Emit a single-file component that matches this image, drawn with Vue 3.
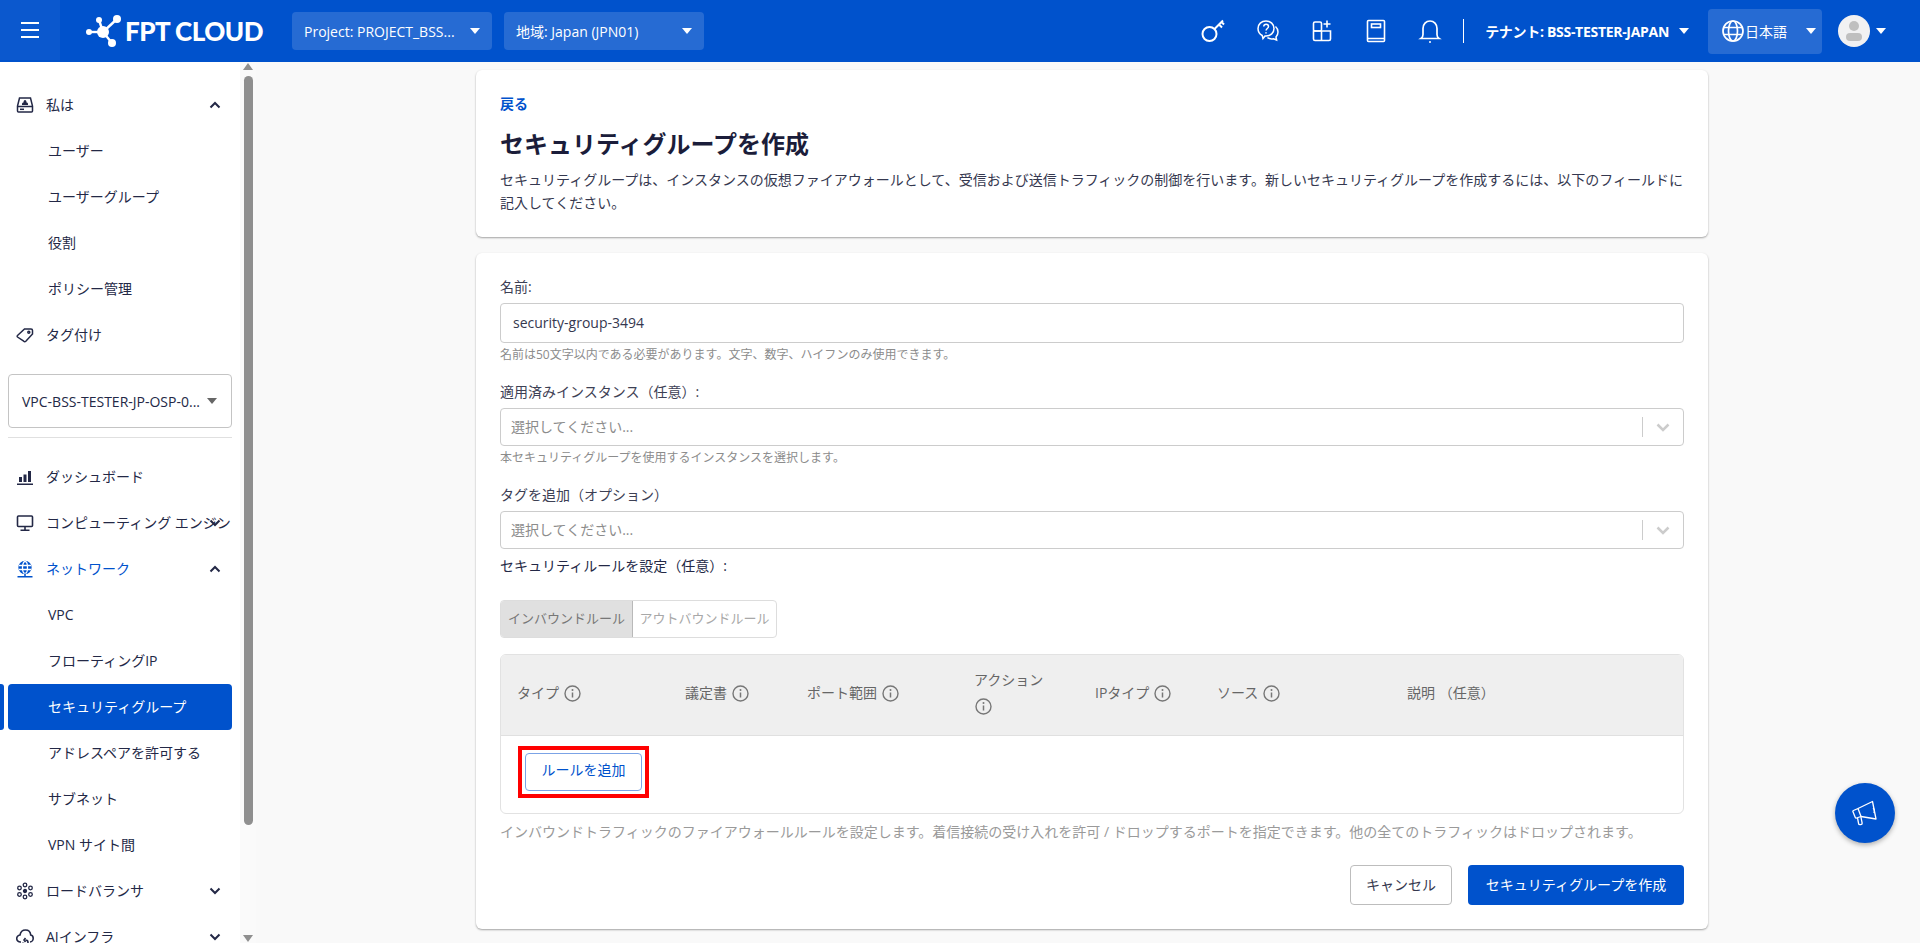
<script setup>
const topNav = [
  { label: '私は', icon: 'drive', open: true },
  { label: 'ユーザー', sub: true },
  { label: 'ユーザーグループ', sub: true },
  { label: '役割', sub: true },
  { label: 'ポリシー管理', sub: true },
  { label: 'タグ付け', icon: 'tag' }
]

const mainNav = [
  { label: 'ダッシュボード', icon: 'bars' },
  { label: 'コンピューティング エンジン', icon: 'monitor', closed: true },
  { label: 'ネットワーク', icon: 'globe', open: true, current: true },
  { label: 'VPC', sub: true },
  { label: 'フローティングIP', sub: true },
  { label: 'セキュリティグループ', sub: true, active: true },
  { label: 'アドレスペアを許可する', sub: true },
  { label: 'サブネット', sub: true },
  { label: 'VPN サイト間', sub: true },
  { label: 'ロードバランサ', icon: 'cluster', closed: true },
  { label: 'AIインフラ', icon: 'cloud', closed: true }
]

const columns = [
  { label: 'タイプ', info: true },
  { label: '議定書', info: true },
  { label: 'ポート範囲', info: true },
  { label: 'アクション', info: true },
  { label: 'IPタイプ', info: true },
  { label: 'ソース', info: true },
  { label: '説明 （任意）', info: false }
]
</script>

<template>
  <div class="page">
    <header class="topbar">
      <button class="burger" aria-label="menu">
        <span></span><span></span><span></span>
      </button>
      <div class="logo">
        <svg width="38" height="36" viewBox="0 0 38 36">
          <g stroke="#fff" stroke-width="2.4">
            <line x1="5" y1="19" x2="18" y2="19" />
            <line x1="14" y1="7" x2="18" y2="19" />
            <line x1="32" y1="6" x2="18" y2="19" />
            <line x1="27" y1="30" x2="18" y2="19" />
          </g>
          <g fill="#fff">
            <circle cx="18" cy="19" r="6" />
            <circle cx="4" cy="19" r="3" />
            <circle cx="14" cy="7" r="3" />
            <circle cx="32" cy="6" r="4" />
            <circle cx="27" cy="30" r="4" />
          </g>
        </svg>
        <span class="logo-text">FPT CLOUD</span>
      </div>
      <div class="top-select"><span>Project: PROJECT_BSS...</span><i class="caret"></i></div>
      <div class="top-select"><span>地域: Japan (JPN01)</span><i class="caret"></i></div>

      <div class="top-right">
        <div class="top-icons">
          <svg width="25" height="24" viewBox="0 0 25 24" fill="none" stroke="#fff" stroke-width="2">
            <circle cx="8.5" cy="15" r="7" />
            <path d="M13.5 10 22 1.5M18 5.5l3 3M20.5 3l2.5 2.5" />
          </svg>
          <svg width="24" height="24" viewBox="0 0 24 24" fill="none" stroke="#fff" stroke-width="1.5">
            <path d="M10 2c4.6 0 8 3.200 8 7.500S14.600 17 10 17l-1 0-2 2.500-.8-3C3.500 15 2 12.500 2 9.500 2 5.200 5.400 2 10 2Z" />
            <path d="M7.700 7.500c.2-3 4.800-3 4.800 0 0 2-2.400 2-2.400 4M10 13.200v1.200" />
            <path d="M19.500 7.500c1.700 1.500 2.500 3.300 2.500 5.500 0 2-.8 3.700-2 5l.6 3-3.200-1.300c-2 .5-4.300 0-6-1" />
          </svg>
          <svg width="24" height="24" viewBox="0 0 24 24" fill="none" stroke="#fff" stroke-width="1.6">
            <rect x="3.500" y="3" width="8" height="9" rx="1.500" />
            <path d="M3.500 12h17v8a1.500 1.500 0 0 1-1.500 1.500H5A1.500 1.500 0 0 1 3.500 20V12ZM11.500 12v9.500" />
            <path d="M17 1.500v7M13.500 5h7" />
          </svg>
          <svg width="24" height="24" viewBox="0 0 24 24" fill="none" stroke="#fff" stroke-width="1.6">
            <path d="M4.500 1.500h15a1 1 0 0 1 1 1v19a1 1 0 0 1-1 1h-15a1 1 0 0 1-1-1v-19a1 1 0 0 1 1-1ZM3.500 19.500h17" />
            <rect x="7.500" y="5" width="9" height="3.500" />
          </svg>
          <svg width="24" height="24" viewBox="0 0 24 24" fill="none" stroke="#fff" stroke-width="1.7">
            <path d="M3 19.500h18c-1.500-1-2-2.500-2-4V9.500c0-4.500-3-7.500-7-7.500S5 5 5 9.500v6c0 1.500-.5 3-2 4Z" />
            <circle cx="12" cy="23" r="1" fill="#fff" stroke="none" />
          </svg>
        </div>
        <div class="top-divider"></div>
        <div class="tenant">テナント: BSS-TESTER-JAPAN</div>
        <i class="caret tenant-caret"></i>
        <div class="lang">
          <svg width="22" height="22" viewBox="0 0 22 22" fill="none" stroke="#fff" stroke-width="1.700">
            <circle cx="11" cy="11" r="10" />
            <ellipse cx="11" cy="11" rx="4.500" ry="10" />
            <path d="M1.500 7.500h19M1.500 14.500h19" />
          </svg>
          <span>日本語</span>
          <i class="caret lang-caret"></i>
        </div>
        <div class="avatar">
          <svg width="32" height="32" viewBox="0 0 32 32">
            <circle cx="16" cy="16" r="16" fill="#f1f1f2" />
            <circle cx="16" cy="11" r="5" fill="#bfbfbf" />
            <rect x="8" y="18" width="16" height="8" rx="4" fill="#bfbfbf" />
          </svg>
        </div>
        <i class="caret avatar-caret"></i>
      </div>
    </header>

    <div class="body">
      <aside class="sidebar">
        <nav class="nav">
          <div class="nav-group first">
            <div
              v-for="item in topNav"
              :key="item.label"
              class="nav-item"
              :class="{ sub: item.sub }"
            >
              <span v-if="item.icon" class="nav-icon">
                <svg v-if="item.icon === 'drive'" width="18" height="18" viewBox="0 0 18 18" fill="none" stroke="#232846" stroke-width="1.500">
                  <path d="M3.500 2h11l2 8v5a1 1 0 0 1-1 1h-13a1 1 0 0 1-1-1v-5l2-8ZM1.500 10.500h15" />
                  <path d="M6 9c-.5-2 1-2.500 1.500-2.500C7.500 5 8 4 9 4s1.500 1 1.500 2.500c.5 0 2 .5 1.500 2.500Z" fill="#232846" stroke="none" />
                  <path d="M4 13.300h4" />
                </svg>
                <svg v-else-if="item.icon === 'tag'" width="18" height="18" viewBox="0 0 18 18" fill="none" stroke="#232846" stroke-width="1.500">
                  <path d="M1.500 9.500 8.500 3H15a1.500 1.500 0 0 1 1.500 1.500V8L9.800 15.200a1.500 1.500 0 0 1-2.100 0L1.500 11a1 1 0 0 1 0-1.500Z" />
                  <circle cx="12.800" cy="6.200" r="1" />
                </svg>
              </span>
              <span class="nav-label">{{ item.label }}</span>
              <svg v-if="item.open" class="chev" width="12" height="8" viewBox="0 0 12 8" fill="none" stroke="#232846" stroke-width="2">
                <path d="M1.500 6.500 6 2l4.500 4.500" />
              </svg>
            </div>
          </div>

          <div class="vpc-select">
            <span>VPC-BSS-TESTER-JP-OSP-0...</span>
            <i class="caret dark"></i>
          </div>
          <div class="nav-divider"></div>

          <div class="nav-group">
            <div
              v-for="item in mainNav"
              :key="item.label"
              class="nav-item"
              :class="{ sub: item.sub, active: item.active, current: item.current }"
            >
              <span v-if="item.icon" class="nav-icon">
                <svg v-if="item.icon === 'bars'" width="18" height="18" viewBox="0 0 18 18" fill="#232846">
                  <rect x="3" y="9" width="3" height="5" />
                  <rect x="7.500" y="6.500" width="3" height="7.500" />
                  <rect x="12" y="3" width="3" height="11" />
                  <rect x="1" y="15.500" width="16" height="1.500" />
                </svg>
                <svg v-else-if="item.icon === 'monitor'" width="18" height="18" viewBox="0 0 18 18" fill="none" stroke="#232846" stroke-width="1.600">
                  <rect x="1.500" y="2" width="15" height="10.500" rx="1" />
                  <path d="M9 12.500v3.500M4.500 16.200h9" />
                </svg>
                <svg v-else-if="item.icon === 'globe'" width="18" height="18" viewBox="0 0 18 18" fill="none" stroke="#0052cc" stroke-width="1.300">
                  <circle cx="9" cy="7.500" r="6" fill="#0052cc" />
                  <ellipse cx="9" cy="7.500" rx="2.500" ry="6" stroke="#fff" />
                  <path d="M3 5.500h12M3 9.500h12" stroke="#fff" />
                  <path d="M9 13.500v3M1.500 16.800h15" stroke-width="1.500" />
                </svg>
                <svg v-else-if="item.icon === 'cluster'" width="18" height="18" viewBox="0 0 18 18" fill="none" stroke="#232846" stroke-width="1.300">
                  <circle cx="9" cy="3" r="1.800" />
                  <circle cx="3.500" cy="6" r="1.800" />
                  <circle cx="14.500" cy="6" r="1.800" />
                  <circle cx="3.500" cy="12.500" r="1.800" />
                  <circle cx="14.500" cy="12.500" r="1.800" />
                  <circle cx="9" cy="15" r="1.800" />
                  <circle cx="9" cy="9" r="1.500" fill="#232846" />
                </svg>
                <svg v-else-if="item.icon === 'cloud'" width="18" height="18" viewBox="0 0 18 18" fill="none" stroke="#232846" stroke-width="1.600">
                  <path d="M5 14H4.500a3.500 3.500 0 0 1-.5-7C4.500 4 6.800 2 9.500 2c3 0 5 2.200 5.200 5 1.500.3 2.500 1.600 2.500 3.200 0 2-1.400 3.800-3.200 3.800" />
                  <path d="M7 14.500a2.500 2.500 0 1 0 2.500-2.500M9.500 10l-1.500 2 1.500 2" />
                </svg>
              </span>
              <span class="nav-label">{{ item.label }}</span>
              <svg v-if="item.open" class="chev" width="12" height="8" viewBox="0 0 12 8" fill="none" stroke="#232846" stroke-width="2">
                <path d="M1.500 6.500 6 2l4.500 4.500" />
              </svg>
              <svg v-if="item.closed" class="chev" width="12" height="8" viewBox="0 0 12 8" fill="none" stroke="#232846" stroke-width="2">
                <path d="M1.500 1.500 6 6l4.500-4.500" />
              </svg>
            </div>
          </div>
        </nav>
        <div class="rail">
          <i class="rail-up"></i>
          <div class="rail-thumb"></div>
          <i class="rail-down"></i>
        </div>
      </aside>

      <main class="main">
        <section class="card head-card">
          <a class="back">戻る</a>
          <h1>セキュリティグループを作成</h1>
          <p>セキュリティグループは、インスタンスの仮想ファイアウォールとして、受信および送信トラフィックの制御を行います。新しいセキュリティグループを作成するには、以下のフィールドに記入してください。</p>
        </section>

        <section class="card form-card">
          <label class="field-label">名前:</label>
          <input class="text-input" value="security-group-3494" readonly />
          <div class="help">名前は50文字以内である必要があります。文字、数字、ハイフンのみ使用できます。</div>

          <label class="field-label spaced">適用済みインスタンス（任意）:</label>
          <div class="select-box">
            <span>選択してください...</span>
            <i class="select-sep"></i>
            <svg width="14" height="9" viewBox="0 0 14 9" fill="none" stroke="#ccc" stroke-width="2.500"><path d="M1.500 1.500 7 7l5.500-5.500" /></svg>
          </div>
          <div class="help">本セキュリティグループを使用するインスタンスを選択します。</div>

          <label class="field-label spaced">タグを追加（オプション）</label>
          <div class="select-box">
            <span>選択してください...</span>
            <i class="select-sep"></i>
            <svg width="14" height="9" viewBox="0 0 14 9" fill="none" stroke="#ccc" stroke-width="2.500"><path d="M1.500 1.500 7 7l5.500-5.500" /></svg>
          </div>

          <label class="field-label rules-label">セキュリティルールを設定（任意）:</label>

          <div class="tabs">
            <div class="tab on">インバウンドルール</div>
            <div class="tab">アウトバウンドルール</div>
          </div>

          <div class="rules">
            <div class="rules-head">
              <div v-for="col in columns" :key="col.label" class="rules-col">
                {{ col.label }}
                <svg v-if="col.info" class="info" width="17" height="17" viewBox="0 0 17 17" fill="none" stroke="#777" stroke-width="1.400">
                  <circle cx="8.500" cy="8.500" r="7.500" />
                  <path d="M8.500 7.500v5" stroke-width="1.500" />
                  <circle cx="8.500" cy="5" r="1" fill="#777" stroke="none" />
                </svg>
              </div>
            </div>
            <div class="rules-body">
              <div class="mark">
                <button class="add-rule">ルールを追加</button>
              </div>
            </div>
          </div>

          <p class="rules-note">インバウンドトラフィックのファイアウォールルールを設定します。着信接続の受け入れを許可 / ドロップするポートを指定できます。他の全てのトラフィックはドロップされます。</p>

          <div class="actions">
            <button class="btn cancel">キャンセル</button>
            <button class="btn primary">セキュリティグループを作成</button>
          </div>
        </section>

        <button class="fab" aria-label="announcements">
          <svg width="26" height="28" viewBox="0 0 26 28" fill="none" stroke="#fff" stroke-width="1.300" stroke-linejoin="round">
            <path d="M1.500 11.500 6 9.500l3 8-4.500 1.500a1 1 0 0 1-1.200-.6L1 12.800a1 1 0 0 1 .5-1.300Z" />
            <path d="M6 9.500 20.500 2.500 24 20 9 17.500" />
            <path d="M21 9c1.500 1 1.800 3.500.8 5" />
            <path d="M5.500 19l1.200 6c.2 1 3.800.6 3.500-.6l-1.300-6.600" />
          </svg>
        </button>
      </main>
    </div>
  </div>
</template>

<style>
html,
body {
  margin: 0;
  background: #fff;
}
</style>

<style scoped>
.page {
  width: 1920px;
  height: 943px;
  overflow: hidden;
  display: flex;
  flex-direction: column;
  font-family: "Open Sans", "Noto Sans CJK JP", sans-serif;
  font-size: 14px;
  color: #232846;
}

/* header */
.topbar {
  flex: none;
  height: 62px;
  display: flex;
  align-items: center;
  background: #0052cc;
  color: #fff;
}

.burger {
  align-self: flex-start;
  width: 60px;
  height: 60px;
  padding: 0;
  border: none;
  background: #0b58ce;
  display: flex;
  flex-direction: column;
  align-items: center;
  justify-content: center;
  gap: 5px;
}

.burger span {
  width: 18px;
  height: 2px;
  background: #fff;
}

.logo {
  width: 207px;
  margin-left: 25px;
  display: flex;
  align-items: center;
  gap: 2px;
}

.logo-text {
  font-family: "Lato", sans-serif;
  font-size: 26px;
  font-weight: 900;
  letter-spacing: -0.5px;
  white-space: nowrap;
}

.top-select {
  width: 200px;
  height: 38px;
  margin-right: 12px;
  padding: 0 12px;
  box-sizing: border-box;
  display: flex;
  align-items: center;
  justify-content: space-between;
  background: rgba(255, 255, 255, 0.15);
  border-radius: 4px;
  white-space: nowrap;
}

.caret {
  display: block;
  flex: none;
  width: 0;
  height: 0;
  border-left: 5px solid transparent;
  border-right: 5px solid transparent;
  border-top: 6px solid #fff;
}

.caret.dark {
  border-top-color: #666;
}

.top-right {
  margin-left: auto;
  padding-right: 34px;
  display: flex;
  align-items: center;
}

.top-icons {
  display: flex;
  align-items: center;
  gap: 30px;
}

.top-divider {
  width: 1px;
  height: 24px;
  margin: 0 21px 0 21px;
  background: #fff;
}

.tenant {
  font-weight: 700;
  font-size: 14px;
  letter-spacing: -0.3px;
  white-space: nowrap;
}

.tenant-caret {
  margin: 0 19px 0 10px;
}

.lang {
  width: 114px;
  height: 45px;
  padding: 0 6px 0 14px;
  box-sizing: border-box;
  display: flex;
  align-items: center;
  gap: 1px;
  background: rgba(255, 255, 255, 0.15);
  border-radius: 4px;
}

.lang span {
  font-size: 14px;
}

.lang-caret {
  margin-left: auto;
}

.avatar {
  margin-left: 16px;
  height: 32px;
}

.avatar-caret {
  margin-left: 6px;
}

/* sidebar */
.body {
  flex: 1;
  min-height: 0;
  display: flex;
}

.sidebar {
  flex: none;
  width: 256px;
  box-sizing: border-box;
  display: flex;
  background: #fff;
  border-right: 1px solid #e9e9e9;
}

.nav {
  width: 240px;
  flex: none;
  overflow: hidden;
  padding-top: 20px;
  box-sizing: border-box;
}

.nav-item {
  position: relative;
  height: 46px;
  padding: 0 19px 0 16px;
  display: flex;
  align-items: center;
  white-space: nowrap;
}

.nav-item.sub {
  margin: 0 8px;
  padding-left: 40px;
  padding-right: 0;
}

.nav-icon {
  flex: none;
  width: 18px;
  height: 18px;
  margin-right: 12px;
}

.nav-icon svg {
  display: block;
}

.nav-label {
  flex: 1;
  min-width: 0;
  margin-top: -2px;
}

.chev {
  flex: none;
}

.nav-item.current .nav-label {
  color: #0052cc;
}

.nav-item.active {
  background: #0052cc;
  color: #fff;
  border-radius: 4px;
}

.nav-item.active::before {
  content: "";
  position: absolute;
  left: -8px;
  top: 0;
  bottom: 0;
  width: 4px;
  background: #0052cc;
  border-radius: 0 3px 3px 0;
}

.vpc-select {
  width: 224px;
  height: 54px;
  margin: 16px 8px 0;
  padding: 0 14px 0 13px;
  box-sizing: border-box;
  display: flex;
  align-items: center;
  justify-content: space-between;
  border: 1px solid #c4c4c4;
  border-radius: 4px;
  white-space: nowrap;
}

.nav-divider {
  width: 224px;
  height: 1px;
  margin: 9px 8px 16px;
  background: #e0e0e0;
}

.rail {
  flex: 1;
  padding: 1px 3px 1px 3px;
  display: flex;
  flex-direction: column;
  align-items: center;
  background: #fafafa;
}

.rail-up,
.rail-down {
  flex: none;
  width: 0;
  height: 0;
  border-left: 5px solid transparent;
  border-right: 5px solid transparent;
}

.rail-up {
  border-bottom: 7px solid #8f8f8f;
}

.rail-down {
  margin-top: auto;
  border-top: 7px solid #8f8f8f;
}

.rail-thumb {
  width: 9px;
  height: 749px;
  margin-top: 6px;
  background: #8f8f8f;
  border-radius: 5px;
}

/* content */
.main {
  position: relative;
  flex: 1;
  min-width: 0;
  padding: 8px 0 0 220px;
  box-sizing: border-box;
  background: #f9f9f9;
}

.card {
  width: 1232px;
  box-sizing: border-box;
  background: #fff;
  border-radius: 6px;
  box-shadow: 0 1px 2px rgba(0, 0, 0, 0.35);
}

.head-card {
  height: 167px;
  padding: 24px 24px 0;
}

.back {
  display: block;
  line-height: 20px;
  font-size: 14px;
  font-weight: 600;
  color: #0052cc;
}

h1 {
  margin: 14px 0 0;
  font-size: 24px;
  line-height: 32px;
  font-weight: 700;
  color: #1b1d3a;
}

.head-card p {
  margin: 8px 0 0;
  line-height: 23px;
  font-size: 14px;
  color: #35384f;
}

.form-card {
  margin-top: 16px;
  padding: 24px 24px;
}

.field-label {
  display: block;
  line-height: 20px;
  margin-bottom: 6px;
  color: #3d4054;
}

.field-label.spaced {
  margin-top: 19px;
}

.rules-label {
  margin: 7px 0 24px;
  color: #232846;
}

.text-input {
  display: block;
  width: 100%;
  height: 40px;
  padding: 0 12px 2px;
  box-sizing: border-box;
  border: 1px solid #ccc;
  border-radius: 4px;
  outline: none;
  font: inherit;
  color: #35384f;
}

.help {
  margin-top: 4px;
  line-height: 16px;
  font-size: 12px;
  color: #8c8c8c;
}

.select-box {
  height: 38px;
  padding: 0 13px 0 10px;
  box-sizing: border-box;
  display: flex;
  align-items: center;
  border: 1px solid #ccc;
  border-radius: 4px;
  color: #8c8c8c;
}

.select-box span {
  margin-top: -3px;
}

.select-sep {
  width: 1px;
  height: 20px;
  margin: 0 13px 0 auto;
  background: #ccc;
}

.tabs {
  width: 277px;
  height: 38px;
  box-sizing: border-box;
  display: flex;
  border: 1px solid #ddd;
  border-radius: 4px;
  overflow: hidden;
  font-size: 13px;
}

.tab {
  flex: 1;
  padding-bottom: 4px;
  display: flex;
  align-items: center;
  justify-content: center;
  white-space: nowrap;
  color: #a8a8a8;
}

.tab.on {
  flex: none;
  width: 131px;
  background: #e0e0e0;
  border-right: 1px solid #b9b9b9;
  color: #777;
}

.rules {
  margin-top: 16px;
  height: 160px;
  box-sizing: border-box;
  border: 1px solid #e2e2e2;
  border-radius: 6px;
  overflow: hidden;
}

.rules-head {
  height: 81px;
  padding: 0 0 4px;
  box-sizing: border-box;
  display: grid;
  grid-template-columns: 168px 122px 167px 121px 122px 190px 1fr;
  align-items: center;
  background: #efefef;
  border-bottom: 1px solid #e0e0e0;
  color: #666;
}

.rules-col {
  padding: 0 17px 0 16px;
  line-height: 26px;
}

.info {
  vertical-align: -4px;
  margin-left: 1px;
}

.rules-body {
  padding: 10px 17px;
}

.mark {
  width: 131px;
  height: 52px;
  padding: 3px;
  box-sizing: border-box;
  border: 4px solid #f00;
}

.add-rule {
  display: block;
  width: 100%;
  height: 100%;
  padding: 0 0 7px;
  background: #fff;
  border: 1px solid #7ba3e6;
  border-radius: 4px;
  font: inherit;
  font-size: 14px;
  color: #0052cc;
}

.rules-note {
  margin: 8px 0 0;
  line-height: 20px;
  color: #9a9a9a;
}

.actions {
  margin-top: 23px;
  display: flex;
  justify-content: flex-end;
  gap: 16px;
}

.btn {
  height: 40px;
  padding: 0 0 3px;
  border-radius: 4px;
  font: inherit;
}

.cancel {
  width: 102px;
  background: #fff;
  border: 1px solid #bdbdbd;
  color: #35384f;
}

.primary {
  width: 216px;
  background: #0052cc;
  border: none;
  color: #fff;
}

.fab {
  position: absolute;
  left: 1579px;
  top: 721px;
  width: 60px;
  height: 60px;
  padding: 0;
  border: none;
  border-radius: 50%;
  background: #0052cc;
  box-shadow: 0 2px 5px rgba(0, 0, 0, 0.3);
  display: flex;
  align-items: center;
  justify-content: center;
}
</style>
